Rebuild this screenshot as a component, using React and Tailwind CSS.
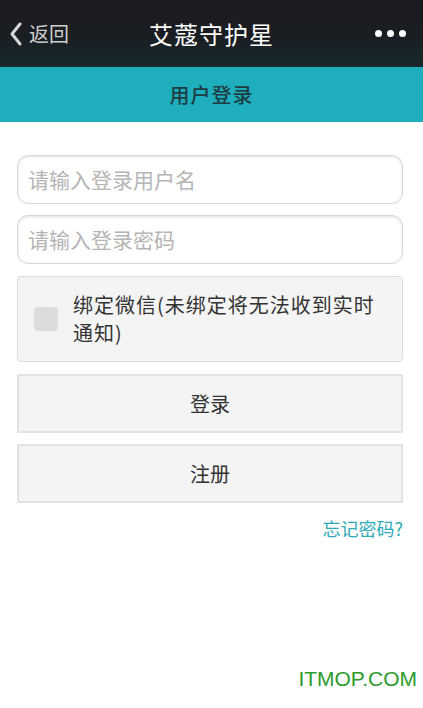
import React from 'react';

const font = { fontFamily: '"Noto Sans CJK SC", "Noto Sans", sans-serif' };

function Header() {
  return (
    <div className="h-[67px] bg-gradient-to-b from-[#1b1c20] via-[#1a1d21] to-[#16292c] flex items-center text-white">
      <div className="flex items-center pl-[9px] w-[110px]">
        <svg width="14" height="24" viewBox="0 0 14 24" className="mr-[6px]">
          <path d="M11 2 L3 12 L11 22" fill="none" stroke="#d6d6d6" strokeWidth="3" strokeLinecap="round" strokeLinejoin="round" />
        </svg>
        <span className="text-[20px] text-[#cfcfcf]">返回</span>
      </div>
      <div className="flex-1 text-center text-[24px] text-white tracking-[1px]">艾蔻守护星</div>
      <div className="w-[110px] flex justify-end pr-[17px] gap-[5px]">
        <span className="w-[7px] h-[7px] rounded-full bg-white" />
        <span className="w-[7px] h-[7px] rounded-full bg-white" />
        <span className="w-[7px] h-[7px] rounded-full bg-white" />
      </div>
    </div>
  );
}

export default function App() {
  return (
    <div className="w-[423px] h-[708px] bg-white relative overflow-hidden" style={font}>
      <Header />
      <div className="h-[55px] bg-[#1eaebd] flex items-center justify-center text-[20px] tracking-[1px] font-medium text-[#1d3d42]">
        用户登录
      </div>

      <div className="pl-[17px] pr-[20px] pt-[33px] flex flex-col">
        <div className="h-[49px] rounded-[11px] border border-[#d8d8d8] shadow-[inset_0_1px_3px_rgba(0,0,0,0.12)] flex items-center px-[10px] text-[21px] text-[#b5b5b5]">
          请输入登录用户名
        </div>
        <div className="mt-[11px] h-[49px] rounded-[11px] border border-[#d8d8d8] shadow-[inset_0_1px_3px_rgba(0,0,0,0.12)] flex items-center px-[10px] text-[21px] text-[#b5b5b5]">
          请输入登录密码
        </div>

        <div className="mt-[12px] h-[86px] rounded-[4px] border border-[#dcdcdc] bg-[#f4f4f4] flex items-center">
          <div className="ml-[16px] w-[24px] h-[24px] rounded-[4px] bg-[#dcdcdc] shrink-0" />
          <div className="ml-[15px] pr-[12px] text-[20px] leading-[28px] text-[#333] tracking-[1px]">
            绑定微信(未绑定将无法收到实时通知)
          </div>
        </div>

        <div className="mt-[12px] h-[59px] border-2 border-[#e2e2e2] bg-[#f4f4f4] flex items-center justify-center text-[20px] text-[#333]">
          登录
        </div>
        <div className="mt-[11px] h-[59px] border-2 border-[#e2e2e2] bg-[#f4f4f4] flex items-center justify-center text-[20px] text-[#333]">
          注册
        </div>

        <div className="mt-[12px] text-right text-[18px] text-[#2eaab8]">忘记密码?</div>
      </div>

      <div className="absolute right-[6px] bottom-[14px] text-[21px] text-[#2c9a2c]" style={{ fontFamily: '"Liberation Sans", Arial, sans-serif' }}>
        ITMOP.COM
      </div>
    </div>
  );
}
